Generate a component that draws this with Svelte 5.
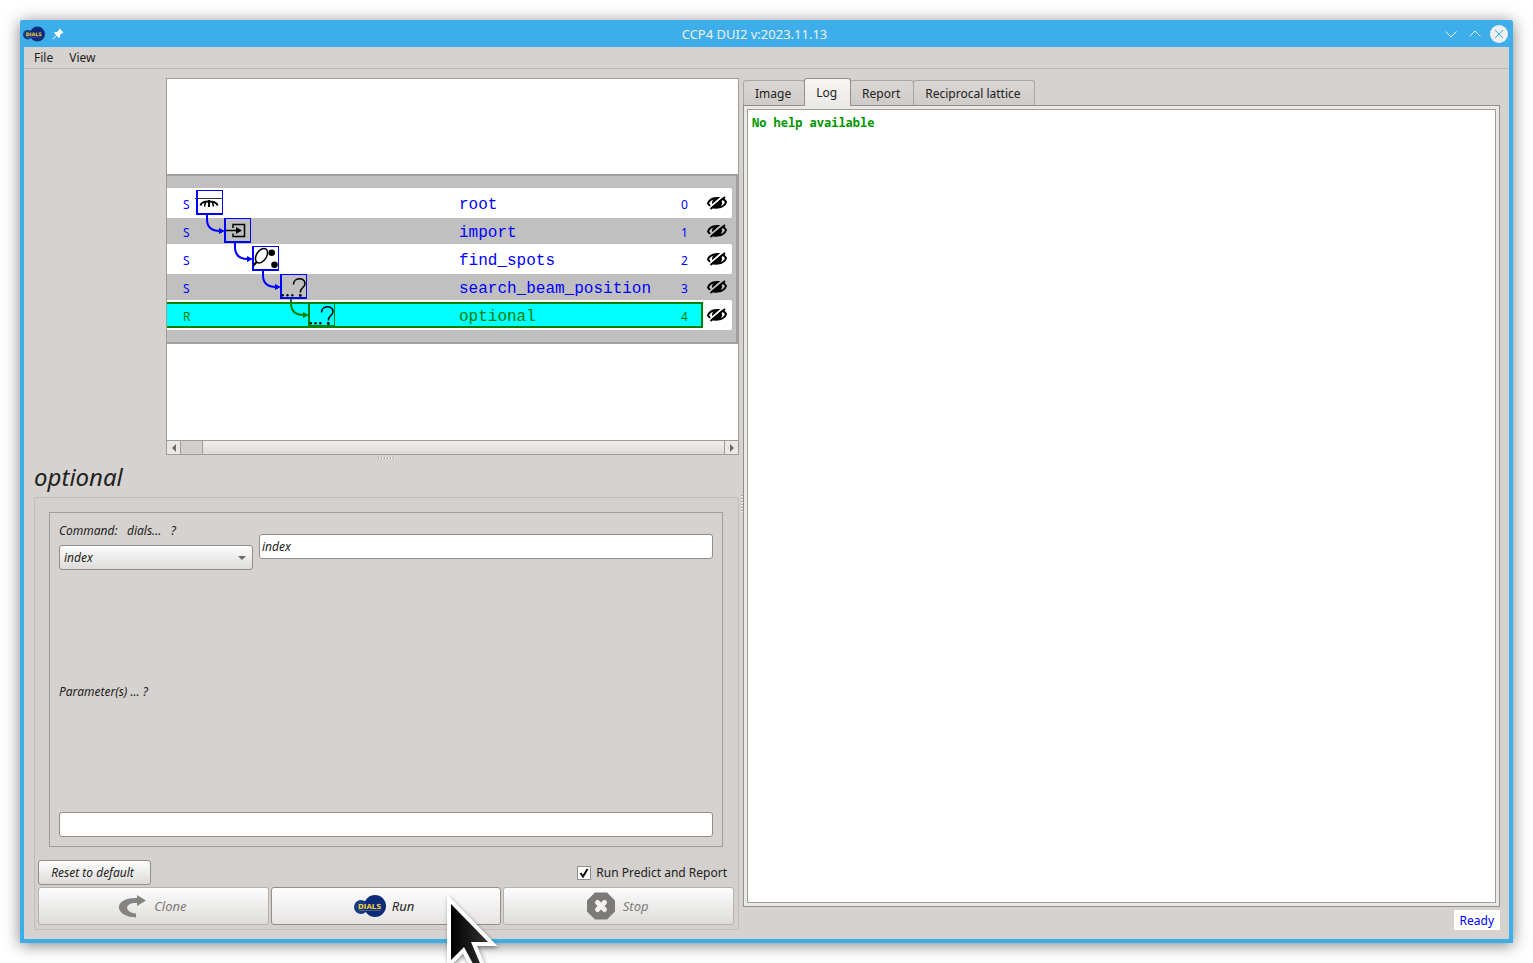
<script lang="ts">
	interface Step {
		id: number;
		status: string;
		name: string;
	}

	const steps: Step[] = [
		{ id: 0, status: 'S', name: 'root' },
		{ id: 1, status: 'S', name: 'import' },
		{ id: 2, status: 'S', name: 'find_spots' },
		{ id: 3, status: 'S', name: 'search_beam_position' },
		{ id: 4, status: 'R', name: 'optional' }
	];
	const tabs = ['Image', 'Log', 'Report', 'Reciprocal lattice'];
	const commands = ['index', 'refine', 'integrate', 'scale'];

	let current = $state(4);
	let activeTab = $state('Log');
	let command = $state('index');
	let commandLine = $state('index');
	let parameters = $state('');
	let predict = $state(true);

	function reset() {
		command = 'index';
		commandLine = 'index';
		parameters = '';
	}
</script>

{#snippet logo(width: number, height: number)}
	<svg {width} {height} viewBox="0 0 32 22" aria-hidden="true">
		<circle cx="7" cy="12" r="7" fill="#173a80" />
		<circle cx="21" cy="11" r="11" fill="#0c2c7a" />
		<text x="4" y="13.5" class="logo-text">DIALS</text>
		<path d="M5 15.5h22" stroke="#7d8090" stroke-width="0.6" />
	</svg>
{/snippet}

{#snippet question()}
	<circle cx="2.8" cy="21.3" r="1.2" />
	<circle cx="7.5" cy="21.3" r="1.2" />
	<circle cx="12.3" cy="21.3" r="1.2" />
	<circle cx="20.3" cy="21.5" r="1.4" />
	<path d="M13.5 10.5C13.5 3 25 3 25 9.5C25 14 20.3 13 20.3 18.5" class="thin" />
{/snippet}

<div class="page">
	<div class="window">
		<header class="titlebar">
			{@render logo(22, 16)}
			<svg class="pin" width="12" height="12" viewBox="0 0 12 12" aria-hidden="true">
				<path d="M7.5 0.5L11.5 4.5L10.5 5.2L10 5L8 7L8 9L7 10L4.8 7.8L1 11.5L0.5 11L4.2 7.2L2 5L3 4L5 4L7 2L6.8 1.5Z" fill="#fff" />
			</svg>
			<h1>CCP4 DUI2 v:2023.11.13</h1>
			<button class="win-btn" aria-label="Minimize">
				<svg width="18" height="18" viewBox="0 0 18 18"><path d="M3.5 6.5L9 12L14.5 6.5" /></svg>
			</button>
			<button class="win-btn" aria-label="Maximize">
				<svg width="18" height="18" viewBox="0 0 18 18"><path d="M3.5 11.5L9 6L14.5 11.5" /></svg>
			</button>
			<button class="win-btn close" aria-label="Close">
				<svg width="18" height="18" viewBox="0 0 18 18">
					<circle cx="9" cy="9" r="9" />
					<path d="M5 5L13 13M13 5L5 13" />
				</svg>
			</button>
		</header>

		<nav class="menubar">
			<button>File</button>
			<button>View</button>
		</nav>

		<main>
			<section class="left">
				<div class="tree">
					<div class="canvas">
						<div class="band">
							{#each steps as step (step.id)}
								<div class="row" class:even={step.id % 2 === 0}>
									<button class="step" class:selected={step.id === current} onclick={() => (current = step.id)}>
										<span>{step.status}</span>
										<span class="name">{step.name}</span>
										<span>{step.id}</span>
									</button>
									<button class="eye" aria-label="Toggle {step.name}">
										<svg width="20" height="16" viewBox="0 0 20 16">
											<path d="M1 8.5C3 2 16 1 19 7C17 13.5 5 15 1 8.5Z" fill="none" stroke="#000" stroke-width="2" />
											<ellipse cx="10" cy="8" rx="5" ry="5" />
											<path class="gap" d="M1.5 13.5L15.5 1.5" stroke-width="2" />
											<path d="M3.5 14L18 2" stroke="#000" stroke-width="2" />
										</svg>
									</button>
								</div>
							{/each}

							<svg class="nodes" width="180" height="166" viewBox="0 0 180 166" aria-hidden="true">
								{#each steps as step (step.id)}
									<g transform="translate({29 + step.id * 28} {14 + step.id * 28})" class:current={step.id === current}>
										<path class="frame" fill-rule="evenodd" d="M0 0H27V25H0ZM2 1V23H26V1Z" />
										{#if step.id > 0}
											<path class="link" d="M-17 -3V1C-17 9 -12 13 -4 13" />
											<path class="frame" d="M-5 10L1 13L-5 16Z" />
										{/if}
										{#if step.id === 0}
											<path d="M-1 8.5H26" stroke="#333" />
											<path class="thick" d="M4.5 15.5C5 12.5 9 11.5 12.5 11.5C16 11.5 21 12.5 21.5 15.5" />
											<path class="thin" d="M9.5 12L8.5 16.5M16.5 12L17.5 16.5" />
											<path class="thick" d="M13 10V17" />
										{:else if step.id === 1}
											<path class="thin" d="M9 10V6.5H20.5V18.5H9V15.5" />
											<path class="thin" d="M2 12.5H13" />
											<path d="M12 9L18 12.5L12 16Z" />
										{:else if step.id === 2}
											<ellipse cx="9.5" cy="9.7" rx="5" ry="8" transform="rotate(33 9.5 9.7)" class="thin" />
											<path d="M1.5 19.5L5 15.5" class="thick" />
											<circle cx="19.7" cy="6.7" r="3.3" />
											<circle cx="22.5" cy="18.7" r="3.3" />
										{:else}
											{@render question()}
										{/if}
									</g>
								{/each}
							</svg>
						</div>
					</div>
					<div class="scrollbar">
						<button aria-label="Scroll left"><svg width="4" height="8" viewBox="0 0 4 8"><path d="M4 0V8L0 4Z" /></svg></button>
						<span class="thumb"></span>
						<span class="track"></span>
						<button aria-label="Scroll right"><svg width="4" height="8" viewBox="0 0 4 8"><path d="M0 0V8L4 4Z" /></svg></button>
					</div>
				</div>

				<div class="grip"></div>
				<h2>{steps[current].name}</h2>

				<div class="group">
					<div class="params">
						<div class="command">
							<div class="command-pick">
								<label for="command">Command:&nbsp;&nbsp; dials...&nbsp;&nbsp; ?</label>
								<div class="select">
									<select id="command" bind:value={command}>
										{#each commands as item}
											<option>{item}</option>
										{/each}
									</select>
									<svg width="8" height="4" viewBox="0 0 8 4" aria-hidden="true"><path d="M0 0H8L4 4Z" /></svg>
								</div>
							</div>
							<input type="text" aria-label="Command line" bind:value={commandLine} />
						</div>
						<label class="params-label" for="parameters">Parameter(s) ... ?</label>
						<input id="parameters" type="text" bind:value={parameters} />
					</div>

					<div class="options">
						<button class="btn reset" onclick={reset}>Reset to default</button>
						<label class="check">
							<span class="box">
								<input type="checkbox" bind:checked={predict} />
								{#if predict}
									<svg width="10" height="10" viewBox="0 0 10 10"><path d="M1.5 5L4 8.5L8.5 1" /></svg>
								{/if}
							</span>
							Run Predict and Report
						</label>
					</div>

					<div class="actions">
						<button class="btn" disabled>
							<svg width="32" height="28" viewBox="0 0 32 28" aria-hidden="true">
								<path d="M21 3L30 8.5L21 14V11C9 10 7 20 20 21.5V25.5C-3 25 -3 5 21 6Z" fill="#858482" />
							</svg>
							Clone
						</button>
						<button class="btn run">
							{@render logo(32, 22)}
							Run
							<svg class="pointer" width="70" height="72" viewBox="0 0 70 72" aria-hidden="true">
								<linearGradient id="arrow-fill">
									<stop offset="0" stop-color="#000" />
									<stop offset="1" stop-color="#333" />
								</linearGradient>
								<path d="M4 9L41 47H24L38 80H32L17 52L4 65Z" fill="url(#arrow-fill)" />
							</svg>
						</button>
						<button class="btn" disabled>
							<svg width="32" height="28" viewBox="0 0 32 28" aria-hidden="true">
								<path d="M10 0.5H22L30 8.5V19.5L22 27.5H10L2 19.5V8.5Z" fill="#7b7a78" />
								<path d="M12.5 10.5L19.5 17.5M19.5 10.5L12.5 17.5" stroke="#f2f1f0" stroke-width="5" stroke-linecap="round" />
							</svg>
							Stop
						</button>
					</div>
				</div>
			</section>

			<div class="splitter"></div>

			<section class="right">
				<div class="tabs" role="tablist">
					{#each tabs as tab}
						<button role="tab" aria-selected={tab === activeTab} class:active={tab === activeTab} onclick={() => (activeTab = tab)}>
							{tab}
						</button>
					{/each}
				</div>
				<div class="pane">
					<div class="log">No help available</div>
				</div>
				<div class="status">Ready</div>
			</section>
		</main>
	</div>
</div>

<style>
	:global(body) {
		background: #fff;
	}

	.page {
		box-sizing: border-box;
		height: 100vh;
		min-height: 700px;
		padding: 20px;
		overflow: hidden;
		font-family: 'Noto Sans', sans-serif;
		font-size: 12px;
		line-height: 17px;
		color: #222;
	}

	.page :global(*) {
		box-sizing: border-box;
	}

	button,
	input,
	select {
		margin: 0;
		padding: 0;
		border: none;
		background: none;
		font: inherit;
		color: inherit;
	}

	h1,
	h2 {
		margin: 0;
		font-weight: 400;
	}

	svg {
		display: block;
		flex: none;
	}

	.window {
		display: flex;
		flex-direction: column;
		height: 100%;
		border: solid #3daee9;
		border-width: 0 4px 4px;
		border-radius: 3px 3px 0 0;
		background: #d6d2cf;
		box-shadow: 0 2px 16px rgba(0, 0, 0, 0.5);
	}

	/* Title bar */
	.titlebar {
		display: flex;
		align-items: center;
		height: 27px;
		margin: 0 -4px;
		padding: 0 5px 0 3px;
		border-radius: 3px 3px 0 0;
		background: #3daee9;
	}

	.logo-text {
		font-family: 'DejaVu Sans', sans-serif;
		font-size: 7px;
		font-style: normal;
		font-weight: 700;
		fill: #f0cf3c;
	}

	.pin {
		margin-left: 7px;
	}

	h1 {
		flex: 1;
		padding: 2px 0 0 9px;
		font-size: 13px;
		text-align: center;
		color: #eff0f1;
	}

	.win-btn {
		margin-left: 6px;
	}

	.win-btn path {
		fill: none;
		stroke: #eff0f1;
	}

	.close circle {
		fill: #eff0f1;
	}

	.close path {
		stroke: #3daee9;
	}

	.menubar {
		display: flex;
		gap: 16px;
		height: 22px;
		padding: 0 10px;
		border-bottom: 1px solid #bcb8b5;
	}

	main {
		display: grid;
		grid-template-columns: 705fr 4px 757fr;
		flex: 1;
		min-height: 0;
		padding: 9px 9px 9px 10px;
	}

	.left,
	.right {
		display: flex;
		flex-direction: column;
		min-width: 0;
	}

	/* Step tree */
	.tree {
		display: flex;
		flex-direction: column;
		flex: 1 1 377px;
		margin-left: 132px;
		border: 1px solid #a09c99;
	}

	.canvas {
		display: flex;
		flex-direction: column;
		justify-content: center;
		flex: 1;
		padding-bottom: 1px;
		background: #fff;
	}

	.band {
		position: relative;
		padding: 12px 4px 12px 0;
		border: solid #a0a0a4;
		border-width: 2px 2px 2px 0;
		background: #c0c0c0;
	}

	.row {
		--row: #c0c0c0;
		display: flex;
		height: 26px;
		border-radius: 0 2px 2px 0;
		background: var(--row);
	}

	.even {
		--row: #fff;
		height: 30px;
		padding: 2px 0;
	}

	.step {
		display: grid;
		grid-template-columns: 276px 1fr 22px;
		align-content: center;
		align-items: baseline;
		flex: 1;
		padding: 3px 0 0 16px;
		text-align: left;
		color: #00f;
	}

	.selected {
		background: #0ff;
		box-shadow:
			inset 0 2px #008000,
			inset 0 -2px #008000,
			inset -2px 0 #008000;
		color: #008000;
	}

	.name {
		font-family: 'Liberation Mono', monospace;
		font-size: 16px;
	}

	.eye {
		padding: 0 5px 0 4px;
	}

	.gap {
		stroke: var(--row);
	}

	.nodes {
		position: absolute;
		top: 0;
		left: 0;
		pointer-events: none;
	}

	.frame {
		fill: #00f;
	}

	.link {
		fill: none;
		stroke: #00f;
		stroke-width: 2;
	}

	.current .frame {
		fill: #008000;
	}

	.current .link {
		stroke: #008000;
	}

	.thin {
		fill: none;
		stroke: #000;
		stroke-width: 1.5;
	}

	.thick {
		fill: none;
		stroke: #000;
		stroke-width: 2;
	}

	.scrollbar {
		display: flex;
		height: 14px;
		border-top: 1px solid #a09c99;
		background: linear-gradient(#dddbd8, #efeeec);
	}

	.scrollbar button {
		display: grid;
		place-items: center;
		width: 13px;
		background: #eae8e6;
	}

	.scrollbar path,
	.select path {
		fill: #6c6a68;
	}

	.thumb {
		width: 23px;
		border: solid #a09c99;
		border-width: 0 1px;
		background: #d2d0cf;
	}

	.track {
		flex: 1;
		border-right: 1px solid #a09c99;
		background: linear-gradient(#efeeec, #dddbd8);
	}

	.grip {
		align-self: center;
		width: 18px;
		height: 2px;
		margin: 2px 0 3px;
		background: repeating-linear-gradient(90deg, #aaa6a3 0 1px, #f4f2f0 1px 2px, transparent 2px 3px);
	}

	h2 {
		height: 35px;
		font-size: 24px;
		font-style: italic;
		line-height: 30px;
	}

	/* Parameter panel */
	.group {
		display: flex;
		flex-direction: column;
		flex: 1 1 433px;
		padding: 14px 4px 4px 3px;
		border: 1px solid #c2bebb;
		border-radius: 2px;
		background: #d4d0cd;
		font-style: italic;
	}

	.params {
		display: flex;
		flex-direction: column;
		flex: 1;
		margin: 0 11px 13px;
		padding: 9px;
		border: 1px solid #a09c99;
		background: #d6d2cf;
	}

	.command {
		display: flex;
		align-items: center;
		gap: 6px;
	}

	.command-pick {
		display: flex;
		flex-direction: column;
		gap: 6px;
		width: 194px;
	}

	.select {
		position: relative;
	}

	.select svg {
		position: absolute;
		top: 11px;
		right: 7px;
		pointer-events: none;
	}

	select {
		display: block;
		width: 100%;
		height: 25px;
		padding: 0 4px;
		border: 1px solid #918e8b;
		border-radius: 3px;
		background: linear-gradient(#fdfdfd, #dddcda);
		appearance: none;
	}

	input[type='text'] {
		height: 25px;
		padding: 0 2px;
		border: 1px solid #918e8b;
		border-radius: 3px;
		background: #fff;
	}

	.command input {
		flex: 1;
	}

	.params-label {
		display: flex;
		align-items: center;
		flex: 1;
	}

	.options {
		display: flex;
		align-items: center;
		justify-content: space-between;
		padding-right: 7px;
	}

	.btn {
		display: flex;
		align-items: center;
		justify-content: center;
		gap: 6px;
		padding-right: 4px;
		border: 1px solid #918e8b;
		border-radius: 3px;
		background: linear-gradient(#fdfdfd, #dddcda);
	}

	.reset {
		width: 113px;
		height: 25px;
	}

	.check {
		display: flex;
		align-items: center;
		gap: 5px;
		font-style: normal;
	}

	.box {
		display: grid;
		place-items: center;
	}

	.box input,
	.box svg {
		grid-area: 1 / 1;
	}

	.box input {
		width: 14px;
		height: 14px;
		border: 1px solid #918e8b;
		background: #fff;
		appearance: none;
	}

	.box svg {
		position: relative;
		pointer-events: none;
	}

	.box path {
		fill: none;
		stroke: #111;
		stroke-width: 2;
	}

	.actions {
		display: grid;
		grid-template-columns: repeat(3, 1fr);
		gap: 2px;
		margin-top: 2px;
	}

	.actions .btn {
		height: 38px;
		font-size: 13px;
	}

	.btn:disabled {
		border-color: #b5b2af;
		color: #7d7b79;
	}

	.actions .run {
		position: relative;
		background: linear-gradient(#fefefe, #e6e4e3);
	}

	.pointer {
		position: absolute;
		top: 7px;
		left: 175px;
		pointer-events: none;
		filter: drop-shadow(1px 2px 2px rgba(0, 0, 0, 0.4));
	}

	.pointer path {
		stroke: #fff;
		stroke-width: 8;
		stroke-miterlimit: 3;
		paint-order: stroke;
	}

	.splitter {
		align-self: center;
		width: 2px;
		height: 18px;
		margin-left: 2px;
		background: repeating-linear-gradient(#aaa6a3 0 1px, #f4f2f0 1px 2px, transparent 2px 3px);
	}

	/* Tabs */
	.tabs {
		display: flex;
		align-items: flex-end;
		height: 27px;
	}

	.tabs button {
		height: 25px;
		margin-right: -1px;
		padding: 0 13px 0 11px;
		border: 1px solid #aaa6a3;
		border-bottom: none;
		border-radius: 3px 3px 0 0;
		background: linear-gradient(#dad6d4, #cfcbc8);
	}

	.tabs .active {
		position: relative;
		height: 28px;
		margin-bottom: -1px;
		border-color: #918e8b;
		background: linear-gradient(#f6f5f4, #ebe9e6);
	}

	.pane {
		display: flex;
		flex: 1;
		padding: 3px;
		border: 1px solid #918e8b;
		background: #ebe9e6;
	}

	.log {
		flex: 1;
		padding: 4px;
		border: 1px solid #a09c99;
		background: #fff;
		font-family: 'Noto Sans Mono', 'DejaVu Sans Mono', monospace;
		font-weight: 700;
		color: #009600;
	}

	.status {
		align-self: flex-end;
		height: 20px;
		margin-top: 3px;
		padding: 2px 6px;
		background: #fff;
		color: #00f;
	}
</style>
